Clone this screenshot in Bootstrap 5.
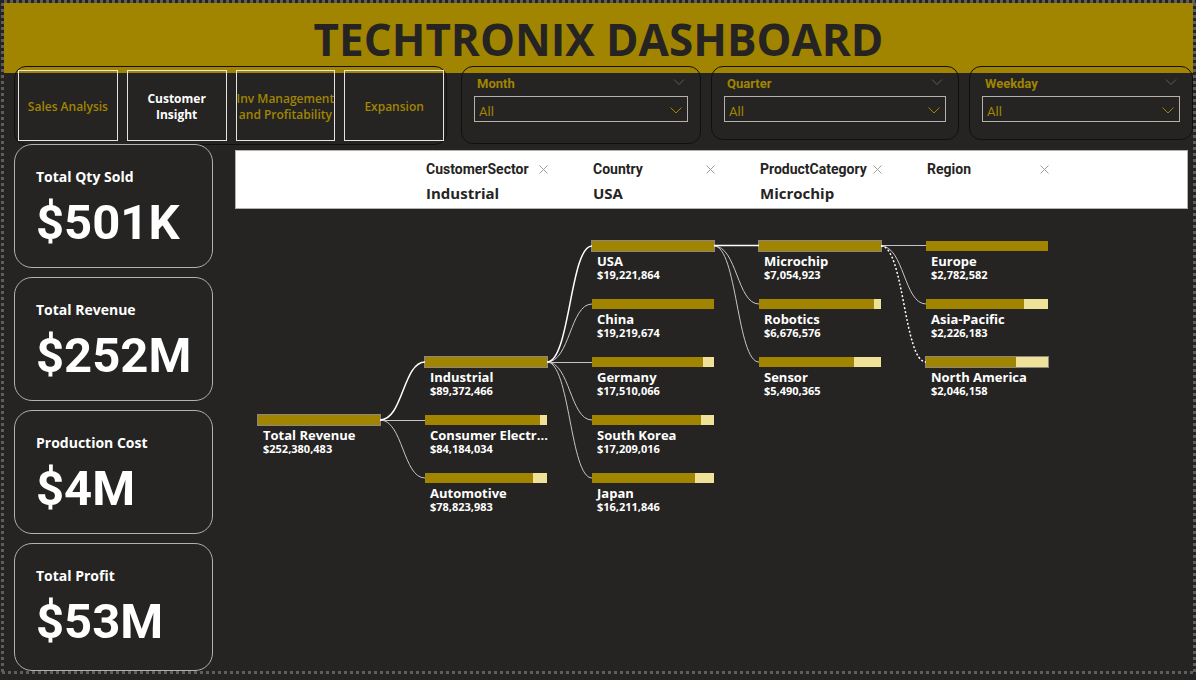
<!DOCTYPE html>
<html lang="en">
<head>
<meta charset="utf-8">
<meta name="viewport" content="width=device-width, initial-scale=1">
<title>Techtronix Dashboard</title>
<link href="https://cdn.jsdelivr.net/npm/bootstrap@5.3.0/dist/css/bootstrap.min.css" rel="stylesheet">
<style>
:root { --gold: #a18500; --ink: #252423; --pale: #f0e199; --edge: #b3b0ad; --dot: #605e5c; }
body { background: var(--ink); color: #fff; font-family: "Open Sans", "Noto Sans", sans-serif; }
.din { font-family: Roboto, "Liberation Sans", sans-serif; }

/* Report canvas with its square-dotted edge */
.report {
  margin: 0 0 5px 1px; padding: 3px;
  background:
    repeating-linear-gradient(90deg, transparent 0 3px, var(--dot) 3px 6px) 0 0 / 100% 3px no-repeat,
    repeating-linear-gradient(90deg, transparent 0 1px, var(--dot) 1px 4px, transparent 4px 6px) 0 100% / 100% 3px no-repeat,
    repeating-linear-gradient(180deg, transparent 0 3px, var(--dot) 3px 6px) 0 0 / 3px 100% no-repeat,
    repeating-linear-gradient(180deg, transparent 0 3px, var(--dot) 3px 6px) 100% 0 / 3px 100% no-repeat;
}
.banner { background: var(--gold); color: var(--ink); height: 70px; padding-top: 3px; }
.banner h1 { font-size: 44px; line-height: 66px; font-weight: 700; }

.toolbar-grid { display: grid; grid-template-columns: 437fr 240fr 248fr 224fr; gap: 10px; margin: -7px 0 0 10px; align-items: start; }
.panel { border: 1px solid #11100f; border-radius: 12px; }
.page-nav { padding: 3px 2px 3px 3px; gap: 9px; }
.page-nav .btn {
  flex: 1 1 0; min-width: 0; height: 71px; padding: 2px 0 0; border: 1px solid #e6e4e2; border-radius: 0;
  font-size: 12px; line-height: 16px; font-weight: 600; color: var(--gold); white-space: nowrap;
}
.page-nav .btn.active { color: #fff; background: none; border-color: #e6e4e2; font-weight: 700; }
.slicer { padding: 8px 12px 17px; }
.slicer.tall { padding-bottom: 21px; }
.slicer label { font-size: 13px; line-height: 18px; font-weight: 700; color: var(--gold); padding-left: 3px; }
.slicer .form-select {
  height: 26px; margin-top: 3px; padding: 5px 24px 0 4px; border: 1px solid var(--edge); border-radius: 0;
  font-size: 13px; line-height: 19px; color: var(--gold);
  background: url("data:image/svg+xml,%3Csvg xmlns='http://www.w3.org/2000/svg' width='12' height='7'%3E%3Cpath d='M.5.5 6 6 11.500.5' fill='none' stroke='%23a18500'/%3E%3C/svg%3E") no-repeat right 5px top 10px;
}
.more { width: 12px; height: 7px; stroke: #605e5c; fill: none; margin-right: 3px; }

.body-grid { display: grid; grid-template-columns: 199px minmax(0, 1fr); gap: 22px; margin: -1px 5px 0 10px; }
.kpis { gap: 9px; }
.kpi { min-height: 124px; border: 1px solid var(--edge); border-radius: 18px; padding: 22px 20px 0 21px; }
.kpi:last-child { min-height: 128px; }
.kpi h2 { font-size: 14px; line-height: 20px; font-weight: 700; margin: 0; }
.kpi p { font-size: 49px; line-height: 64px; font-weight: 700; margin: 4px 0 0; }

/* Decomposition tree: header and tree share the same columns */
.levels, .tree { display: grid; grid-template-columns: repeat(5, 122px); column-gap: 45px; }
.levels { background: #fff; color: var(--ink); border: 1px solid var(--edge); margin-top: 6px; padding: 8px 22px 6px 23px; height: 59px; }
.levels > div:first-child { grid-column: 2; }
.levels h3 { font-size: 14px; line-height: 20px; font-weight: 700; margin: 0; }
.levels p { font-size: 15px; line-height: 24px; font-weight: 700; margin: 2px 0 0; }
.levels button { border: 0; background: none; padding: 0; line-height: 0; }
.levels svg { width: 9px; height: 9px; stroke: #a19f9d; fill: none; }
.tree { grid-auto-rows: 58px; margin: 32px 0 0 23px; width: max-content; }
.links { width: 790px; height: 290px; left: 0; top: 0; fill: none; stroke: #c8c6c4; }
.links .chosen { stroke: #fff; stroke-width: 1.5; }
.links .dotted { stroke: #fff; stroke-dasharray: 2 2; stroke-width: 1.5; }
.node .progress { height: 10px; border-radius: 0; background: var(--pale); }
.node .progress-bar { background: var(--gold); }
.node.chosen .progress { outline: 1px solid #8a8886; }
.node h4 { font-size: 13px; line-height: 15px; font-weight: 700; margin: 3px 0 0; padding-left: 5px; white-space: nowrap; }
.node p { font-size: 11px; line-height: 12px; font-weight: 700; margin: 0; padding-left: 5px; }
.c1 { grid-column: 1; } .c2 { grid-column: 2; } .c3 { grid-column: 3; } .c4 { grid-column: 4; } .c5 { grid-column: 5; }
.r1 { grid-row: 1; } .r2 { grid-row: 2; } .r3 { grid-row: 3; } .r4 { grid-row: 4; } .r5 { grid-row: 5; }
</style>
</head>
<body>
<main class="report">
  <header class="banner text-center"><h1 class="m-0">TECHTRONIX DASHBOARD</h1></header>

  <div class="toolbar-grid">
    <nav class="panel page-nav d-flex me-1" aria-label="Pages">
      <button type="button" class="btn">Sales Analysis</button>
      <button type="button" class="btn active" aria-current="page">Customer<br>Insight</button>
      <button type="button" class="btn d-flex align-items-center justify-content-center">Inv Management<br>and Profitability</button>
      <button type="button" class="btn">Expansion</button>
    </nav>
    <section class="panel slicer tall din">
      <div class="d-flex justify-content-between"><label for="month">Month</label><svg class="more mt-1" viewBox="0 0 12 7"><path d="M1 .5 6 5.500 11 .5"/></svg></div>
      <select id="month" class="form-select din"><option>All</option></select>
    </section>
    <section class="panel slicer din">
      <div class="d-flex justify-content-between"><label for="quarter">Quarter</label><svg class="more mt-1" viewBox="0 0 12 7"><path d="M1 .5 6 5.500 11 .5"/></svg></div>
      <select id="quarter" class="form-select din"><option>All</option></select>
    </section>
    <section class="panel slicer din">
      <div class="d-flex justify-content-between"><label for="weekday">Weekday</label><svg class="more mt-1" viewBox="0 0 12 7"><path d="M1 .5 6 5.500 11 .5"/></svg></div>
      <select id="weekday" class="form-select din"><option>All</option></select>
    </section>
  </div>

  <div class="body-grid">
    <div class="kpis d-flex flex-column">
      <section class="kpi"><h2>Total Qty Sold</h2><p class="din">$501K</p></section>
      <section class="kpi"><h2>Total Revenue</h2><p class="din">$252M</p></section>
      <section class="kpi"><h2>Production Cost</h2><p class="din">$4M</p></section>
      <section class="kpi"><h2>Total Profit</h2><p class="din">$53M</p></section>
    </div>

    <section>
      <div class="levels">
        <div><div class="d-flex justify-content-between align-items-center"><h3 class="din">CustomerSector</h3><button type="button" aria-label="Remove CustomerSector"><svg viewBox="0 0 9 9"><path d="M.5.5l8 8M8.500.5l-8 8"/></svg></button></div><p>Industrial</p></div>
        <div><div class="d-flex justify-content-between align-items-center"><h3 class="din">Country</h3><button type="button" aria-label="Remove Country"><svg viewBox="0 0 9 9"><path d="M.5.5l8 8M8.500.5l-8 8"/></svg></button></div><p>USA</p></div>
        <div><div class="d-flex justify-content-between align-items-center"><h3 class="din">ProductCategory</h3><button type="button" aria-label="Remove ProductCategory"><svg viewBox="0 0 9 9"><path d="M.5.5l8 8M8.500.5l-8 8"/></svg></button></div><p>Microchip</p></div>
        <div><div class="d-flex justify-content-between align-items-center"><h3 class="din">Region</h3><button type="button" aria-label="Remove Region"><svg viewBox="0 0 9 9"><path d="M.5.5l8 8M8.500.5l-8 8"/></svg></button></div></div>
      </div>

      <div class="tree position-relative">
        <svg class="links position-absolute" viewBox="0 0 790 290" aria-hidden="true">
          <path d="M122 179.500H167M122 179C145 179 145 237 167 237"/>
          <path d="M289 121C312 121 312 63 334 63M289 121.500H334M289 121C312 121 312 179 334 179M289 121C312 121 312 237 334 237"/>
          <path d="M456 5C479 5 479 63 501 63M456 5C479 5 479 121 501 121"/>
          <path d="M623 4.500H668M623 5C646 5 646 63 668 63"/>
          <path class="chosen" d="M122 179C145 179 145 121 167 121M289 121C312 121 312 5 334 5M456 4.500H501"/>
          <path class="dotted" d="M623 5C646 5 646 121 668 121"/>
        </svg>
        <div class="node chosen c1 r4"><div class="progress"><div class="progress-bar" style="width:100%"></div></div><h4>Total Revenue</h4><p>$252,380,483</p></div>

        <div class="node chosen c2 r3"><div class="progress"><div class="progress-bar" style="width:100%"></div></div><h4>Industrial</h4><p>$89,372,466</p></div>
        <div class="node c2 r4"><div class="progress"><div class="progress-bar" style="width:94.2%"></div></div><h4>Consumer Electr...</h4><p>$84,184,034</p></div>
        <div class="node c2 r5"><div class="progress"><div class="progress-bar" style="width:88.2%"></div></div><h4>Automotive</h4><p>$78,823,983</p></div>

        <div class="node chosen c3 r1"><div class="progress"><div class="progress-bar" style="width:100%"></div></div><h4>USA</h4><p>$19,221,864</p></div>
        <div class="node c3 r2"><div class="progress"><div class="progress-bar" style="width:100%"></div></div><h4>China</h4><p>$19,219,674</p></div>
        <div class="node c3 r3"><div class="progress"><div class="progress-bar" style="width:91.1%"></div></div><h4>Germany</h4><p>$17,510,066</p></div>
        <div class="node c3 r4"><div class="progress"><div class="progress-bar" style="width:89.5%"></div></div><h4>South Korea</h4><p>$17,209,016</p></div>
        <div class="node c3 r5"><div class="progress"><div class="progress-bar" style="width:84.3%"></div></div><h4>Japan</h4><p>$16,211,846</p></div>

        <div class="node chosen c4 r1"><div class="progress"><div class="progress-bar" style="width:100%"></div></div><h4>Microchip</h4><p>$7,054,923</p></div>
        <div class="node c4 r2"><div class="progress"><div class="progress-bar" style="width:94.6%"></div></div><h4>Robotics</h4><p>$6,676,576</p></div>
        <div class="node c4 r3"><div class="progress"><div class="progress-bar" style="width:77.8%"></div></div><h4>Sensor</h4><p>$5,490,365</p></div>

        <div class="node c5 r1"><div class="progress"><div class="progress-bar" style="width:100%"></div></div><h4>Europe</h4><p>$2,782,582</p></div>
        <div class="node c5 r2"><div class="progress"><div class="progress-bar" style="width:80%"></div></div><h4>Asia-Pacific</h4><p>$2,226,183</p></div>
        <div class="node chosen c5 r3"><div class="progress"><div class="progress-bar" style="width:73.5%"></div></div><h4>North America</h4><p>$2,046,158</p></div>
      </div>
    </section>
  </div>
</main>
<script src="https://cdn.jsdelivr.net/npm/bootstrap@5.3.0/dist/js/bootstrap.bundle.min.js"></script>
</body>
</html>
